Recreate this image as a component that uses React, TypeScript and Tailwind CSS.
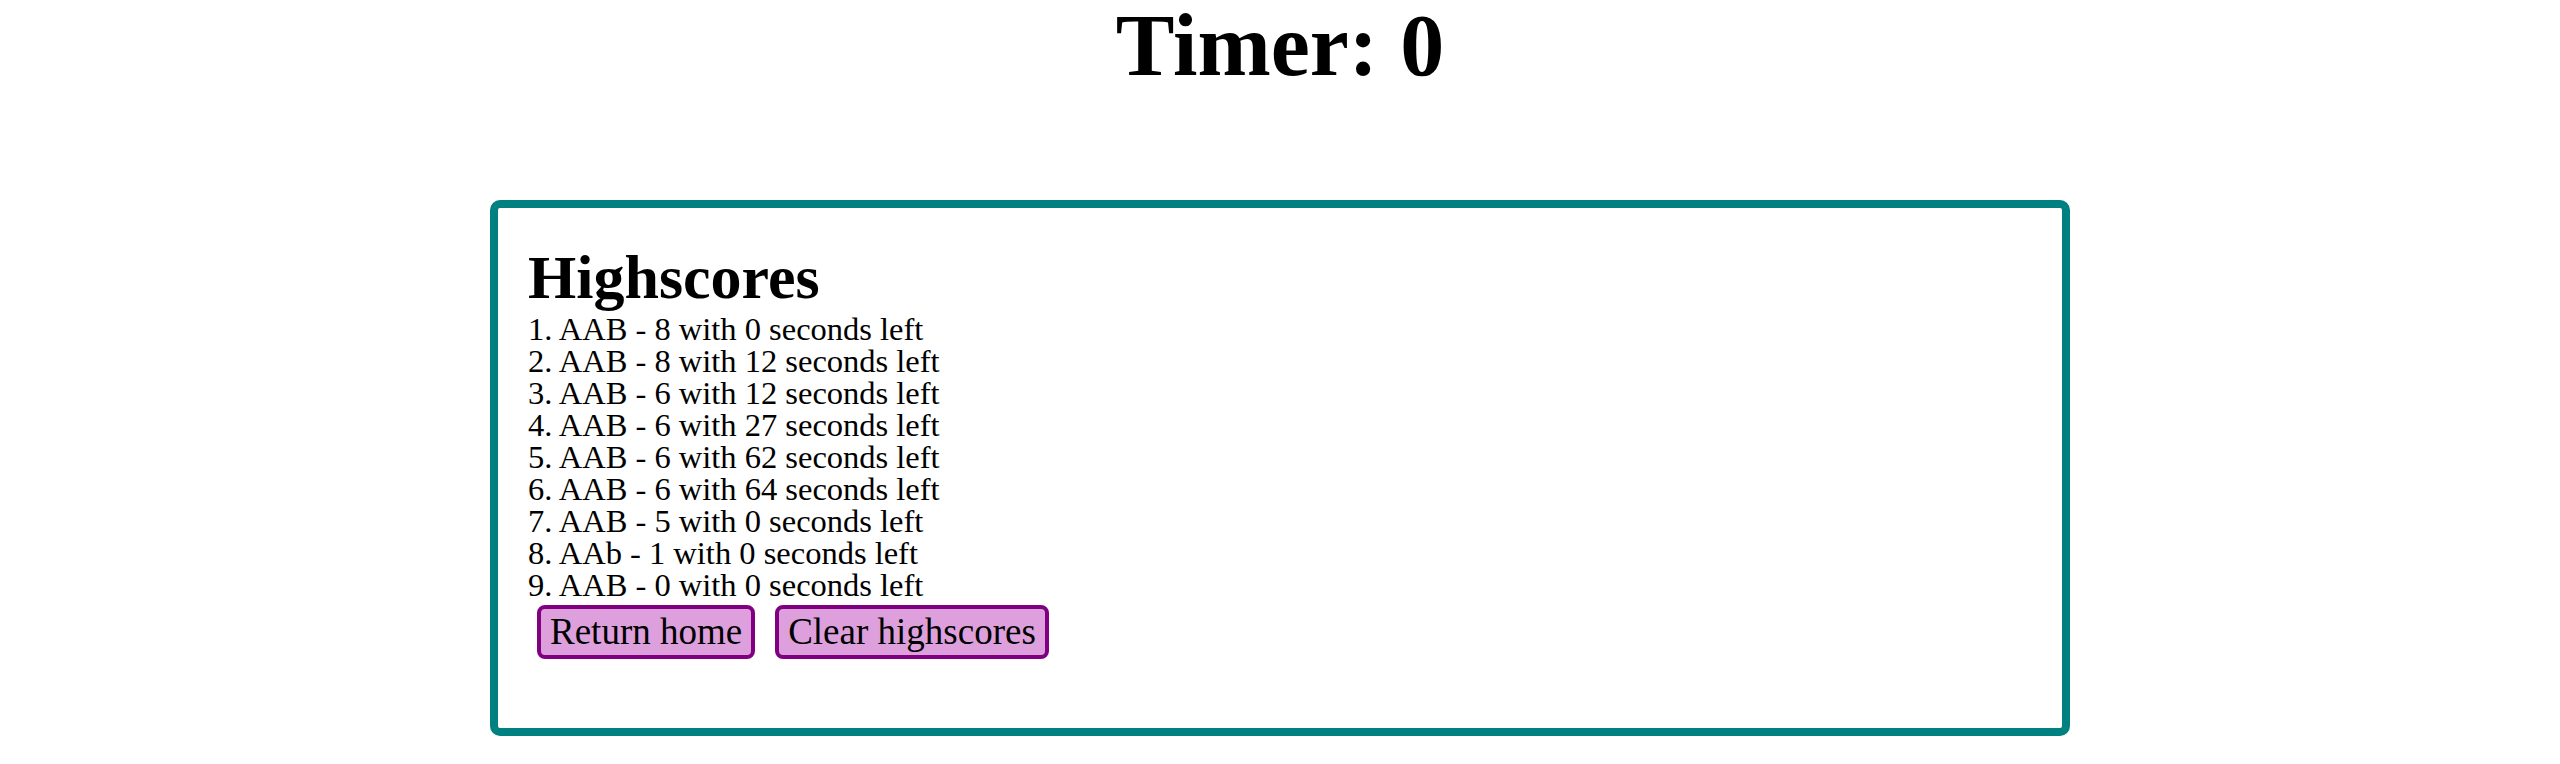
const scores = [
  "AAB - 8 with 0 seconds left",
  "AAB - 8 with 12 seconds left",
  "AAB - 6 with 12 seconds left",
  "AAB - 6 with 27 seconds left",
  "AAB - 6 with 62 seconds left",
  "AAB - 6 with 64 seconds left",
  "AAB - 5 with 0 seconds left",
  "AAb - 1 with 0 seconds left",
  "AAB - 0 with 0 seconds left",
];

export default function App() {
  return (
    <div className="min-h-screen bg-white text-black font-['Liberation_Serif',serif]">
      {/* Timer header */}
      <h1 className="pt-[2px] text-center text-[88px] leading-[88px] font-bold">Timer: 0</h1>

      {/* Highscores card */}
      <div className="mx-auto mt-[110px] w-[1580px] rounded-[10px] border-8 border-[#008080] pl-[30px] pt-[39px] pb-[69px]">
        <h2 className="text-[62px] leading-[60px] font-bold">Highscores</h2>
        <ol className="mt-[6px] text-[32.5px] leading-[32px]">
          {scores.map((s, i) => (
            <li key={i}>
              {i + 1}. {s}
            </li>
          ))}
        </ol>
        <div className="mt-[4px] ml-[9px] flex gap-[20px]">
          <button className="rounded-[8px] border-4 border-[#800080] bg-[#dda0dd] px-[9px] py-px text-[37px] leading-[44px]">
            Return home
          </button>
          <button className="rounded-[8px] border-4 border-[#800080] bg-[#dda0dd] px-[9px] py-px text-[37px] leading-[44px]">
            Clear highscores
          </button>
        </div>
      </div>
    </div>
  );
}
